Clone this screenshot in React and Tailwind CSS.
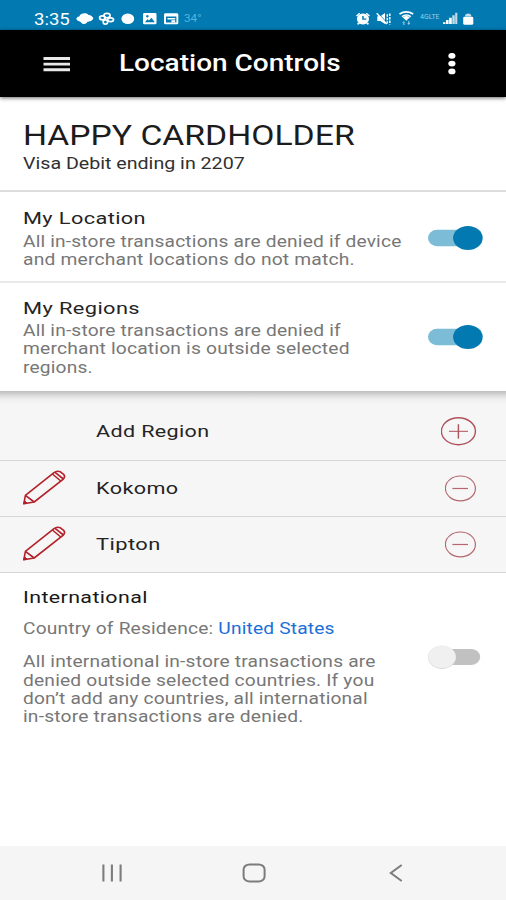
import { useLayoutEffect, useRef } from "react";

// A single line of wide-set text, stretched horizontally to a given width.
function Line({ w, className = "", children }) {
  const ref = useRef(null);
  useLayoutEffect(() => {
    const el = ref.current;
    el.style.transform = `scaleX(${w / el.offsetWidth})`;
  }, [w]);
  return (
    <span ref={ref} className={`block w-max origin-left whitespace-nowrap ${className}`}>
      {children}
    </span>
  );
}

const HEADING = "text-[16.8px] leading-5 tracking-[0.3px] text-[#242424]";
const BODY = "text-[15.6px] leading-[18.33px] tracking-[0.15px] text-[#777777]";

function Toggle({ on }) {
  return on ? (
    <svg className="h-6 w-14 shrink-0" viewBox="0 0 56 24">
      <rect x="0" y="3.7" width="44" height="16.6" rx="9" ry="8.3" fill="#7dbcd7" />
      <ellipse cx="39.9" cy="12" rx="14.8" ry="12" fill="#0279b1" />
    </svg>
  ) : (
    <svg className="h-6 w-14 shrink-0" viewBox="0 0 56 24">
      <rect x="14" y="4" width="38.2" height="16" rx="9.5" ry="8" fill="#c1c1c1" />
      <ellipse cx="14" cy="12.3" rx="14" ry="11.6" fill="#dcdcdc" />
      <ellipse cx="14" cy="11.8" rx="13.6" ry="11.2" fill="#f0f0f0" />
    </svg>
  );
}

function Pencil() {
  return (
    <svg className="-mt-1 h-9 w-11" viewBox="0 -0.6 44 36" fill="none" stroke="#b3222b" strokeWidth="1.6" strokeLinejoin="round">
      <path d="M.8 34.2 L2.4 25.8 L31 3 Q34 .8 37.4 2.2 L40.6 4.8 Q42.8 7.3 40 9.8 L11.2 32.4 Z" />
      <path d="M2.4 25.8 L11.2 32.4 M29.4 4.4 L37.8 11.4 M31.8 2.6 L40.4 9.4" />
      <path d="M.8 34.2 L1.5 31.2 L4.2 33.5 Z" fill="#b3222b" strokeWidth="1" />
    </svg>
  );
}

function StatusBar() {
  return (
    <div className="flex h-[30px] items-start justify-between bg-[#0279b1] pl-[34px] pr-[31px] pt-[10px] text-white">
      <div className="flex">
        <div className="w-[42px]">
          <Line w={36} className="text-[16.5px] leading-5">3:35</Line>
        </div>
        <svg className="h-[18px] w-[104px]" viewBox="76 10 104 18" fill="#fff">
          <path d="M78.8 21 C75.4 20 75.8 16.8 79.3 16.4 C80.3 13.2 86 12.2 88.2 14.8 C90.5 15 93.2 17 93.3 18.4 C92.5 20.6 89.5 21.6 87.5 21.8 C86.2 24.6 82 24.8 81 22.2 Z" />
          <g fill="none" stroke="#fff" strokeWidth="1.7">
            <ellipse cx="107" cy="15.6" rx="3.1" ry="2.2" />
            <ellipse cx="102.4" cy="17.8" rx="2.8" ry="2" />
            <ellipse cx="110.6" cy="19.8" rx="2.9" ry="1.9" />
            <ellipse cx="105.4" cy="22" rx="2.2" ry="2.2" />
          </g>
          <ellipse cx="127.8" cy="18.7" rx="6.4" ry="5.3" />
          <path fillRule="evenodd" d="M144.5 13 H155 Q156.5 13 156.5 14.3 V22.9 Q156.5 24.2 155 24.2 H144.5 Q143 24.2 143 22.9 V14.3 Q143 13 144.5 13 Z M145 22.2 H154.8 L151.5 17.8 L149 20.6 L147.4 19.2 Z M147.3 15 A1.3 1.2 0 1 0 147.4 15 Z" />
          <path fillRule="evenodd" d="M165.5 13.2 H176.8 Q178.3 13.2 178.3 14.5 V22.9 Q178.3 24.2 176.8 24.2 H165.5 Q164 24.2 164 22.9 V14.5 Q164 13.2 165.5 13.2 Z M166 16.6 V22.4 H176.4 V16.6 Z" />
          <path d="M167.5 18 H175.2 V19.4 H167.5 Z M171.4 20.2 H175.2 V22.4 H171.4 Z" />
        </svg>
        <div className="pl-[4px]">
          <Line w={17} className="text-[11px] leading-[18px] text-[#54b4dd]">34°</Line>
        </div>
      </div>
      <div className="flex">
        <svg className="h-[18px] w-[64px]" viewBox="354 10 64 18" fill="#fff">
          <path fillRule="evenodd" d="M363 13.6 A6 5.4 0 1 1 362.9 13.6 Z M362.2 16 V19.8 H366.3 V18.5 H363.7 V16 Z" />
          <path d="M356 15.5 L359.3 12.8 L360.2 13.8 L357 16.4 Z M370 15.5 L366.7 12.8 L365.8 13.8 L369 16.4 Z M358 22.4 L360 23.4 L358.4 24.8 L357 24 Z M368 22.4 L366 23.4 L367.6 24.8 L369 24 Z" />
          <path d="M377.3 16.2 H380.4 L385 13 V24 L380.4 21 H377.3 Z" />
          <path d="M377.8 13 L387.8 23.6" stroke="#0279b1" strokeWidth="1" />
          <path d="M376.7 13.2 L386.7 24" stroke="#fff" strokeWidth="1.4" />
          <path d="M387.3 14.2 V23.5 M389.8 13.5 V24.5" stroke="#fff" strokeWidth="1.5" strokeDasharray="2.5 1" />
          <path d="M399.5 14 Q406.3 9.7 413.2 14 M402 16.6 Q406.3 13.5 410.8 16.6" fill="none" stroke="#fff" strokeWidth="1.6" />
          <path d="M402.6 17.3 Q406.3 14.8 410 17.3 L406.3 20.8 Z" />
          <path d="M403.8 21 L402.3 23 H405.2 Z M403.3 22.5 H404.4 V25 H403.3 Z M408.8 25 L407.3 23 H410.2 Z M408.3 21 H409.4 V23.5 H408.3 Z" opacity=".65" />
        </svg>
        <div className="w-[25px] pl-[2px]">
          <Line w={20} className="-mt-px text-[8px] leading-[15px] text-[#9ccce3]">4GLTE</Line>
        </div>
        <svg className="h-[18px] w-[32px]" viewBox="443 10 32 18" fill="#fff">
          <path d="M443 22.2 H445.5 V24 H443 Z M446 20 H448.6 V24 H446 Z M449.1 17.8 H451.8 V24 H449.1 Z" />
          <path d="M452.3 15.2 H454.8 V24 H452.3 Z M455.2 12.8 H457.3 V24 H455.2 Z" opacity=".75" />
          <path d="M464.5 16.8 H471.8 Q473.3 16.8 473.3 18 V23.5 Q473.3 24.8 471.6 24.8 H464.9 Q463.2 24.8 463.2 23.5 V18 Q463.2 16.8 464.5 16.8 Z" />
          <path d="M465 16.6 Q465 13.4 468.3 13.4 Q471.4 13.4 471.4 16.6 Z" opacity=".75" />
        </svg>
      </div>
    </div>
  );
}

function AppBar() {
  return (
    <div className="relative z-10 flex h-[67px] items-center bg-black pl-[43px] shadow-[0_1px_4px_rgba(0,0,0,0.6)]">
      <svg className="h-4 w-[27px]" viewBox="0 0 27 16" fill="#e9e9e9">
        <path d="M.5 1 H27 V4 H.5 Z M.5 6.7 H27 V9.5 H.5 Z M.5 12.3 H27 V15.2 H.5 Z" />
      </svg>
      <div className="-mt-[2px] w-[377px] pl-[49px]">
        <Line w={221.5} className="text-[23.5px] font-medium leading-7 text-white">Location Controls</Line>
      </div>
      <svg className="h-[22px] w-[9px]" viewBox="0 0 9 22" fill="#fff">
        <ellipse cx="4.9" cy="2.8" rx="3.6" ry="2.9" />
        <ellipse cx="4.9" cy="10.6" rx="3.6" ry="2.9" />
        <ellipse cx="4.9" cy="18.4" rx="3.6" ry="2.9" />
      </svg>
    </div>
  );
}

function RegionRow({ name, width }) {
  return (
    <div className="flex h-14 items-center border-b border-[#d6d6d6] pl-[23px] pr-[29px]">
      <Pencil />
      <div className="-mt-px flex-1 pl-[29px]">
        <Line w={width} className={HEADING}>{name}</Line>
      </div>
      <svg className="h-[27px] w-8" viewBox="0 0 32 27" fill="none" stroke="#b5666f" strokeWidth="1.2">
        <ellipse cx="15.4" cy="13.4" rx="15" ry="12.4" />
        <path d="M7.4 13.5 H23" />
      </svg>
    </div>
  );
}

export default function App() {
  return (
    <div className="flex h-[900px] w-[506px] flex-col overflow-hidden bg-white font-['Roboto',sans-serif]">
      <StatusBar />
      <AppBar />

      <header className="h-[95px] border-b-2 border-[#dcdcdc] pl-[23px] pt-[24px]">
        <Line w={332} className="text-[27px] leading-[30px] text-[#1c1c1c]">HAPPY CARDHOLDER</Line>
        <Line w={222} className="mt-[3px] text-[16px] leading-5 text-[#303030]">Visa Debit ending in 2207</Line>
      </header>

      <section className="flex h-[91px] justify-between border-b-2 border-[#e9e9e9] pl-[23px] pr-[22px] pt-[16px]">
        <div>
          <Line w={123} className={HEADING}>My Location</Line>
          <div className="mt-[5px]">
            <Line w={379} className={BODY}>All in-store transactions are denied if device</Line>
            <Line w={332} className={BODY}>and merchant locations do not match.</Line>
          </div>
        </div>
        <div className="pt-[18px]"><Toggle on /></div>
      </section>

      <section className="flex h-[108px] justify-between pl-[23px] pr-[22px] pt-[15px]">
        <div>
          <Line w={117} className={HEADING}>My Regions</Line>
          <div className="mt-[4px]">
            <Line w={318} className={BODY}>All in-store transactions are denied if</Line>
            <Line w={327} className={BODY}>merchant location is outside selected</Line>
            <Line w={70} className={BODY}>regions.</Line>
          </div>
        </div>
        <div className="pt-[27px]"><Toggle on /></div>
      </section>

      <section className="bg-[#f6f6f6]">
        <div className="h-[70px] border-b border-[#d6d6d6] bg-[linear-gradient(#bdbdbd,#d9d9d9_4px,#eeeeee_8px,#f6f6f6_14px)]">
          <div className="flex items-center justify-between pl-24 pr-[29px] pt-[26px]">
            <div className="-mt-[2px]">
              <Line w={114} className={HEADING}>Add Region</Line>
            </div>
            <svg className="h-[29px] w-9" viewBox="0 0 36 29" fill="none" stroke="#b0525d" strokeWidth="1.4">
              <ellipse cx="17.4" cy="14.2" rx="17" ry="13.5" />
              <path d="M8 14.3 H27" strokeWidth="1" />
              <path d="M17.4 7.2 V21.6" />
            </svg>
          </div>
        </div>
        <RegionRow name="Kokomo" width={82.5} />
        <RegionRow name="Tipton" width={64} />
      </section>

      <section className="flex flex-1 justify-between pl-[23px] pr-[22px] pt-[14px]">
        <div>
          <Line w={125} className="text-[16.8px] leading-5 tracking-[0.3px] text-[#181818]">International</Line>
          <Line w={312} className={`mt-[13px] ${BODY}`}>
            Country of Residence: <span className="text-[#1a6fd6]">United States</span>
          </Line>
          <div className="mt-[15px]">
            <Line w={353} className={BODY}>All international in-store transactions are</Line>
            <Line w={352} className={BODY}>denied outside selected countries. If you</Line>
            <Line w={345} className={BODY}>don’t add any countries, all international</Line>
            <Line w={280} className={BODY}>in-store transactions are denied.</Line>
          </div>
        </div>
        <div className="pt-[58px]"><Toggle /></div>
      </section>

      <nav className="flex h-[54px] items-center justify-between bg-[#f5f5f5] pl-[101px] pr-[103px]">
        <svg className="h-5 w-[22px]" viewBox="0 0 22 20" stroke="#7c7c7c" strokeWidth="2.1">
          <path d="M2.4 1.5 V18.5 M10.9 1.5 V18.5 M19.6 1.5 V18.5" />
        </svg>
        <svg className="mr-[5px] h-5 w-6" viewBox="0 0 24 20" fill="none" stroke="#7c7c7c" strokeWidth="2">
          <rect x="1.6" y="1.4" width="21" height="17" rx="6" ry="5" />
        </svg>
        <svg className="h-5 w-[14px]" viewBox="0 0 14 20" fill="none" stroke="#7c7c7c" strokeWidth="2">
          <path d="M12.7 2 L1.8 10 L12.7 18" />
        </svg>
      </nav>
    </div>
  );
}
